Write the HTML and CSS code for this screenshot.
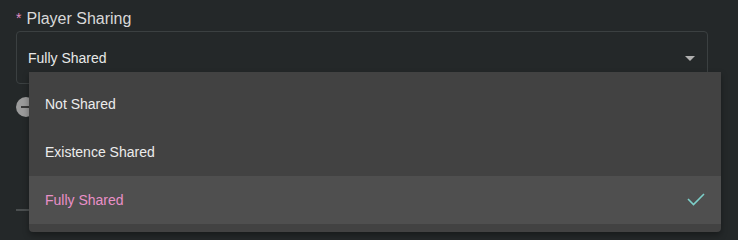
FILE: index.html
```html
<!DOCTYPE html>
<html>
<head>
<meta charset="utf-8">
<link rel="stylesheet" href="styles.css">
</head>
<body>
<div class="page">
  <div class="field">
    <div class="label"><span class="req">*</span>Player Sharing</div>
    <div class="select">
      <span class="value">Fully Shared</span>
      <span class="arrow"></span>
    </div>
  </div>
  <div class="row">
    <span class="remove"><span class="minus"></span></span>
  </div>
  <div class="divider"></div>

  <ul class="menu">
    <li class="item">Not Shared</li>
    <li class="item">Existence Shared</li>
    <li class="item selected">Fully Shared
      <svg class="check" width="18" height="14" viewBox="0 0 18 14"><polyline points="1,6 6.5,11.5 17,1" fill="none" stroke="#7ccfc9" stroke-width="1.6"/></svg>
    </li>
  </ul>
</div>
</body>
</html>
```

FILE: styles.css
```css
html, body {
  margin: 0;
  padding: 0;
  background: #242829;
  font-family: "Liberation Sans", Arial, sans-serif;
  color: #e6e6e6;
}
.page {
  position: relative;
  width: 738px;
  height: 240px;
  overflow: hidden;
  padding: 9px 30px 0 16px;
  box-sizing: border-box;
}
.label {
  font-size: 16px;
  line-height: 20px;
  color: #d9d9d9;
  display: flex;
  align-items: center;
}
.req {
  color: #e48fc6;
  font-size: 14px;
  margin-right: 5px;
  position: relative;
  top: -1px;
}
.select {
  margin-top: 2px;
  height: 53px;
  box-sizing: border-box;
  border: 1px solid #3b4041;
  border-radius: 4px;
  display: flex;
  align-items: center;
  justify-content: space-between;
  padding: 0 12px 0 11px;
}
.value {
  font-size: 14px;
  color: #e8e8e8;
}
.arrow {
  width: 0;
  height: 0;
  border-left: 5px solid transparent;
  border-right: 5px solid transparent;
  border-top: 5px solid #b0b0b0;
  margin-top: 2px;
}
.row {
  margin-top: 13px;
  height: 20px;
  display: flex;
}
.remove {
  width: 20px;
  height: 20px;
  border-radius: 50%;
  background: #9b9b9b;
  display: flex;
  align-items: center;
  justify-content: center;
}
.minus {
  width: 11px;
  height: 2px;
  background: #3a3a3a;
}
.divider {
  margin-top: 92px;
  height: 2px;
  background: #4a4e4f;
}
.menu {
  position: absolute;
  left: 29px;
  top: 72px;
  width: 692px;
  margin: 0;
  padding: 8px 0;
  list-style: none;
  background: #424242;
  border-radius: 0 0 4px 4px;
  box-shadow: 0 3px 6px rgba(0,0,0,0.35);
}
.item {
  height: 48px;
  display: flex;
  align-items: center;
  justify-content: space-between;
  padding: 0 16px;
  font-size: 14px;
  color: #ececec;
}
.item.selected {
  background: #4f4f4f;
  color: #e990c8;
}
.check {
  display: block;
}
```
